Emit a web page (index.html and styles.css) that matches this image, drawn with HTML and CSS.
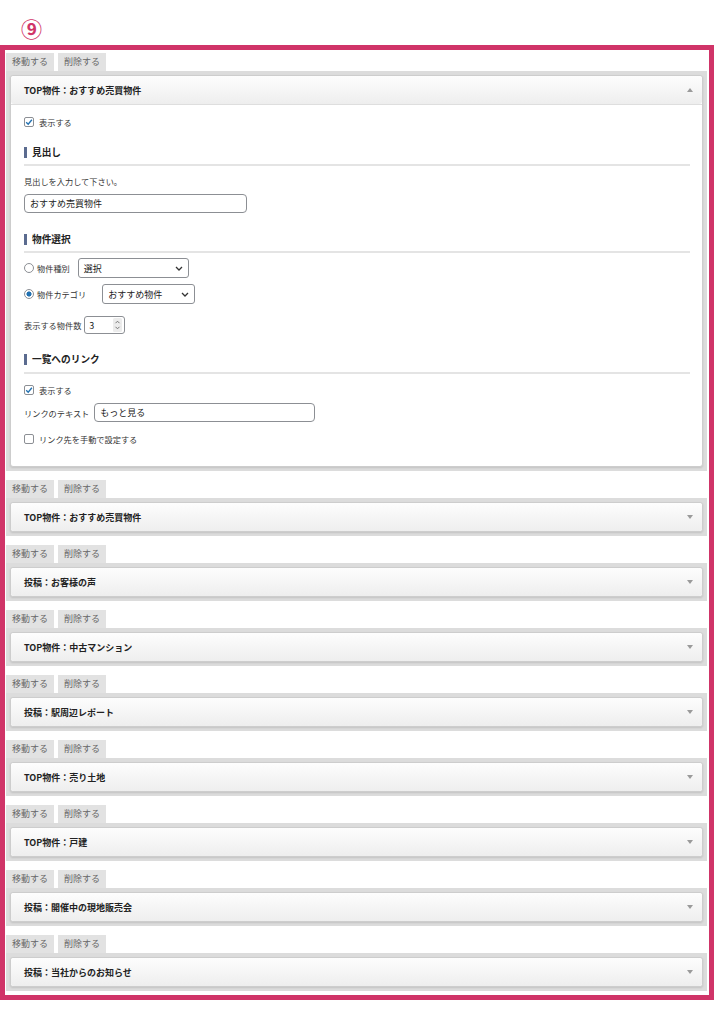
FILE: index.html
```html
<!DOCTYPE html>
<html lang="ja">

<head>
    <meta charset="UTF-8">
    <meta name="viewport" content="width=device-width, initial-scale=1.0">
    <title>ウィジェット設定</title>
    <link rel="stylesheet" href="styles.css">
</head>

<body>
    <div class="step">⑨</div>

    <div class="frame">
        <div class="widget">
            <div class="tabs"><span class="tab">移動する</span><span class="tab">削除する</span></div>
            <div class="box">
                <div class="card">
                    <div class="card-head">
                        <span class="title">TOP物件：おすすめ売買物件</span>
                        <span class="arrow up"></span>
                    </div>
                    <div class="card-body">
                        <label class="check">
                            <span class="cb"><svg width="8" height="8" viewBox="0 0 10 10"><path d="M1.5 5.3 L4 7.8 L8.6 2.2" fill="none" stroke="#2271b1" stroke-width="1.7"/></svg></span>
                            表示する
                        </label>

                        <h3 class="heading">見出し</h3>
                        <p class="hint">見出しを入力して下さい。</p>
                        <input type="text" class="text heading-text" value="おすすめ売買物件">

                        <h3 class="heading second">物件選択</h3>
                        <div class="radio-row">
                            <span class="radio"></span>
                            <span class="radio-label">物件種別</span>
                            <div class="select type-select">
                                <span>選択</span>
                                <svg width="8" height="5" viewBox="0 0 8 5"><path d="M1 1 L4 4 L7 1" fill="none" stroke="#333" stroke-width="1.3"/></svg>
                            </div>
                        </div>
                        <div class="radio-row next">
                            <span class="radio on"></span>
                            <span class="radio-label">物件カテゴリ</span>
                            <div class="select cat-select">
                                <span>おすすめ物件</span>
                                <svg width="8" height="5" viewBox="0 0 8 5"><path d="M1 1 L4 4 L7 1" fill="none" stroke="#333" stroke-width="1.3"/></svg>
                            </div>
                        </div>
                        <div class="count-row">
                            <span>表示する物件数</span>
                            <div class="number">
                                <span>3</span>
                                <svg width="9" height="14" viewBox="0 0 9 14"><rect width="9" height="14" rx="1.5" fill="#ececec"/><path d="M2.5 5.2 L4.5 3.2 L6.5 5.2 M2.5 8.8 L4.5 10.8 L6.5 8.8" fill="none" stroke="#777" stroke-width="1"/></svg>
                            </div>
                        </div>

                        <h3 class="heading third">一覧へのリンク</h3>
                        <label class="check after-heading">
                            <span class="cb"><svg width="8" height="8" viewBox="0 0 10 10"><path d="M1.5 5.3 L4 7.8 L8.6 2.2" fill="none" stroke="#2271b1" stroke-width="1.7"/></svg></span>
                            表示する
                        </label>
                        <div class="link-row">
                            <span>リンクのテキスト</span>
                            <input type="text" class="text link-text" value="もっと見る">
                        </div>
                        <label class="check last">
                            <span class="cb"></span>
                            リンク先を手動で設定する
                        </label>
                    </div>
                </div>
            </div>
        </div>

        <div class="widget">
            <div class="tabs"><span class="tab">移動する</span><span class="tab">削除する</span></div>
            <div class="box">
                <div class="card">
                    <div class="card-head"><span class="title">TOP物件：おすすめ売買物件</span><span class="arrow"></span></div>
                </div>
            </div>
        </div>

        <div class="widget">
            <div class="tabs"><span class="tab">移動する</span><span class="tab">削除する</span></div>
            <div class="box">
                <div class="card">
                    <div class="card-head"><span class="title">投稿：お客様の声</span><span class="arrow"></span></div>
                </div>
            </div>
        </div>

        <div class="widget">
            <div class="tabs"><span class="tab">移動する</span><span class="tab">削除する</span></div>
            <div class="box">
                <div class="card">
                    <div class="card-head"><span class="title">TOP物件：中古マンション</span><span class="arrow"></span></div>
                </div>
            </div>
        </div>

        <div class="widget">
            <div class="tabs"><span class="tab">移動する</span><span class="tab">削除する</span></div>
            <div class="box">
                <div class="card">
                    <div class="card-head"><span class="title">投稿：駅周辺レポート</span><span class="arrow"></span></div>
                </div>
            </div>
        </div>

        <div class="widget">
            <div class="tabs"><span class="tab">移動する</span><span class="tab">削除する</span></div>
            <div class="box">
                <div class="card">
                    <div class="card-head"><span class="title">TOP物件：売り土地</span><span class="arrow"></span></div>
                </div>
            </div>
        </div>

        <div class="widget">
            <div class="tabs"><span class="tab">移動する</span><span class="tab">削除する</span></div>
            <div class="box">
                <div class="card">
                    <div class="card-head"><span class="title">TOP物件：戸建</span><span class="arrow"></span></div>
                </div>
            </div>
        </div>

        <div class="widget">
            <div class="tabs"><span class="tab">移動する</span><span class="tab">削除する</span></div>
            <div class="box">
                <div class="card">
                    <div class="card-head"><span class="title">投稿：開催中の現地販売会</span><span class="arrow"></span></div>
                </div>
            </div>
        </div>

        <div class="widget">
            <div class="tabs"><span class="tab">移動する</span><span class="tab">削除する</span></div>
            <div class="box">
                <div class="card">
                    <div class="card-head"><span class="title">投稿：当社からのお知らせ</span><span class="arrow"></span></div>
                </div>
            </div>
        </div>
    </div>
</body>

</html>
```

FILE: styles.css
```css
body {
    margin: 0;
    background-color: #fff;
    font-family: "Noto Sans CJK JP", "Noto Sans", sans-serif;
    color: #333;
}

.step {
    height: 45px;
    box-sizing: border-box;
    padding: 17px 0 0 21px;
    font-size: 21px;
    line-height: 22px;
    font-weight: bold;
    color: #d03468;
}

.frame {
    width: 714px;
    box-sizing: border-box;
    border: 5px solid #d03468;
    padding: 3px 2px 4px 1px;
}

.widget {
    margin-bottom: 9px;
}

.widget:last-child {
    margin-bottom: 0;
}

.tabs {
    display: flex;
    gap: 4px;
    height: 18px;
}

.tab {
    padding: 0 6px;
    background-color: #e2e2e2;
    color: #666;
    font-size: 9px;
    line-height: 18px;
}

.box {
    background-color: #dcdcdc;
    padding: 4px;
}

.card {
    background-color: #fff;
    border: 1px solid #cdcdcd;
    border-radius: 3px;
    box-shadow: 0 1px 2px rgba(0, 0, 0, 0.12);
}

.card-head {
    display: flex;
    justify-content: space-between;
    align-items: center;
    height: 28px;
    padding: 0 9px 0 13px;
    background: linear-gradient(#fdfdfd, #eeeeee);
    border-radius: 3px;
}

.card-body {
    border-top: 1px solid #dedede;
    padding: 7px 12px 17px 13px;
}

.title {
    font-size: 9px;
    font-weight: bold;
    color: #222;
}

.arrow {
    width: 0;
    height: 0;
    border-left: 3.5px solid transparent;
    border-right: 3.5px solid transparent;
    border-top: 4px solid #9a9a9a;
}

.arrow.up {
    border-top: none;
    border-bottom: 4px solid #9a9a9a;
}

.check {
    display: flex;
    align-items: center;
    height: 20px;
    font-size: 8.2px;
}

.cb {
    display: flex;
    align-items: center;
    justify-content: center;
    width: 10px;
    height: 10px;
    box-sizing: border-box;
    margin-right: 5px;
    border: 1px solid #8c8f94;
    border-radius: 2px;
    background-color: #fff;
}

.check.after-heading {
    margin-top: 6px;
}

.check.last {
    margin-top: 7px;
}

.heading {
    display: flex;
    align-items: center;
    margin: 13px 0 0;
    height: 14px;
    padding-bottom: 5px;
    border-bottom: 2px solid #e4e4e4;
    font-size: 9.7px;
    font-weight: bold;
    color: #222;
}

.heading::before {
    content: "";
    width: 3px;
    height: 11px;
    margin-right: 5px;
    background-color: #5b6b8f;
}

.heading.second {
    margin-top: 19px;
}

.heading.third {
    margin-top: 18px;
    padding-bottom: 6px;
}

.hint {
    margin: 8px 0 0;
    height: 14px;
    line-height: 14px;
    font-size: 8.2px;
}

.text {
    display: block;
    box-sizing: border-box;
    height: 19px;
    padding: 0 5px;
    border: 1px solid #8c8f94;
    border-radius: 4px;
    font-family: inherit;
    font-size: 9px;
    color: #222;
    background-color: #fff;
}

.heading-text {
    margin-top: 6px;
    width: 223px;
}

.radio-row {
    display: flex;
    align-items: center;
    height: 20px;
    margin-top: 5px;
    font-size: 8.2px;
}

.radio-row.next {
    margin-top: 6px;
}

.radio {
    width: 10px;
    height: 10px;
    box-sizing: border-box;
    margin-right: 3px;
    border: 1px solid #8c8f94;
    border-radius: 50%;
    background-color: #fff;
}

.radio.on {
    background: radial-gradient(circle, #2271b1 0, #2271b1 2.3px, #fff 2.8px);
}

.select {
    display: flex;
    justify-content: space-between;
    align-items: center;
    box-sizing: border-box;
    height: 20px;
    padding: 0 5px 0 5px;
    border: 1px solid #8c8f94;
    border-radius: 3px;
    font-size: 9px;
    color: #222;
}

.type-select {
    width: 111px;
    margin-left: 8px;
}

.cat-select {
    width: 93px;
    margin-left: 16px;
}

.count-row {
    display: flex;
    align-items: center;
    height: 18px;
    margin-top: 12px;
    font-size: 8.2px;
}

.number {
    display: flex;
    justify-content: space-between;
    align-items: center;
    box-sizing: border-box;
    width: 41px;
    height: 18px;
    margin-left: 3px;
    padding: 0 2px 0 4px;
    border: 1px solid #8c8f94;
    border-radius: 3px;
    font-size: 9px;
    color: #222;
}

.link-row {
    display: flex;
    align-items: center;
    height: 19px;
    margin-top: 3px;
    font-size: 8.2px;
}

.link-text {
    width: 221px;
    margin-left: 5px;
}
```
